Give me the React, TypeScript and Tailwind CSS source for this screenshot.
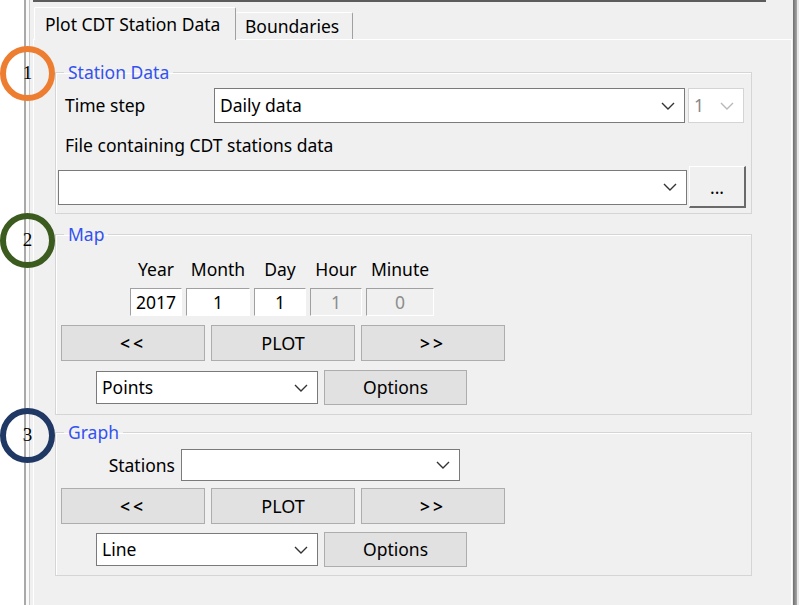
import type { ReactNode } from 'react'

const FONT = { fontFamily: '"Noto Sans", "Open Sans", sans-serif' }

function Chevron({ light }: { light?: boolean }) {
    return (
        <svg width="14" height="8" viewBox="0 0 14 8" className="shrink-0">
            <polyline points="1,1 7,7 13,1" fill="none" stroke={light ? '#b8b8b8' : '#333333'} strokeWidth="1.4" />
        </svg>
    )
}

function Combo({ text, className, disabled }: { text?: string; className: string; disabled?: boolean }) {
    return (
        <div
            className={`flex items-center justify-between pl-[5px] pr-[9px] ${
                disabled ? 'border border-[#d4d4d4] bg-white text-[#8a8a8a]' : 'border border-[#7a7a7a] bg-white text-black'
            } ${className}`}
        >
            <span>{text}</span>
            <Chevron light={disabled} />
        </div>
    )
}

function Btn({ children, className }: { children: ReactNode; className: string }) {
    return (
        <div className={`flex items-center justify-center border border-[#adadad] bg-[#e1e1e1] text-black ${className}`}>
            {children}
        </div>
    )
}

function Group({ title, children, className }: { title: string; children: ReactNode; className?: string }) {
    return (
        <fieldset className={`w-[697px] border border-[#d5d5d5] shadow-[inset_1px_1px_0_#ffffff] ${className ?? ''}`}>
            <legend className="ml-[8px] px-[4px] leading-[20px] text-[#3352f0]">{title}</legend>
            {children}
        </fieldset>
    )
}

function NavButtons({ className }: { className: string }) {
    return (
        <div className={`flex gap-[6px] ml-[5px] ${className}`}>
            <Btn className="w-[144px] h-[36px] tracking-[3px] font-semibold">&lt;&lt;</Btn>
            <Btn className="w-[144px] h-[36px] text-[18px]">PLOT</Btn>
            <Btn className="w-[144px] h-[36px] tracking-[3px] font-semibold">&gt;&gt;</Btn>
        </div>
    )
}

function TimeField({ label, value, w, disabled }: { label: string; value: string; w: string; disabled?: boolean }) {
    return (
        <div className="flex flex-col items-center">
            <div className="leading-[20px] h-[20px] whitespace-nowrap">{label}</div>
            <div
                className={`mt-[9px] h-[28px] ${w} flex items-center justify-center border-t border-l border-[#a0a0a0] border-r-white border-b-white border-r border-b ${
                    disabled ? 'bg-[#f0f0f0] text-[#8d8d8d]' : 'bg-white text-black'
                }`}
            >
                {value}
            </div>
        </div>
    )
}

function Marker({ n, color, top }: { n: string; color: string; top: string }) {
    return (
        <div
            className={`absolute left-0 ${top} w-[55px] h-[55px] rounded-full border-[6px] flex items-center justify-center text-[19px] text-black`}
            style={{ borderColor: color, fontFamily: '"Liberation Serif", serif' }}
        >
            {n}
        </div>
    )
}

export default function App() {
    return (
        <div className="relative w-[799px] h-[605px] flex bg-white text-[17.5px] text-black overflow-hidden" style={FONT}>
            <div className="w-[24px] bg-white" />
            <div className="w-[2px] bg-[#a9a9a9]" />
            <div className="w-[3px] bg-[#fafafa]" />
            <div className="w-[1px] bg-[#c8c8c8]" />

            {/* main panel */}
            <div className="w-[763px] bg-[#f0f0f0] flex flex-col">
                <div className="h-[2px] flex">
                    <div className="w-[3px]" />
                    <div className="w-[733px] bg-[#5c5c5c]" />
                </div>

                {/* tabs */}
                <div className="h-[37px] flex items-end pl-[4px]">
                    <div className="relative z-10 -mb-[1px] h-[33px] w-[202px] flex items-center pl-[10px] bg-[#f0f0f0] border-t border-l border-white border-r border-r-[#a0a0a0] rounded-t-[2px] whitespace-nowrap">
                        Plot CDT Station Data
                    </div>
                    <div className="h-[27px] w-[117px] flex items-center pl-[9px] bg-[#f0f0f0] border-t border-white border-r border-r-[#a0a0a0] rounded-t-[2px]">
                        Boundaries
                    </div>
                </div>

                {/* tab page */}
                <div className="flex-1 ml-[3px] mr-[1px] border-t border-l border-r border-white pt-[22px] pl-[21px]">
                    <Group title="Station Data" className="pb-[5px]">
                        <div className="flex items-center mt-[6px]">
                            <div className="w-[158px] pl-[9px] whitespace-nowrap">Time step</div>
                            <Combo text="Daily data" className="w-[471px] h-[35px]" />
                            <Combo text="1" disabled className="ml-[3px] w-[56px] h-[35px]" />
                        </div>
                        <div className="mt-[12px] pl-[9px] leading-[20px]">File containing CDT stations data</div>
                        <div className="flex items-center mt-[11px] h-[42px]">
                            <Combo className="ml-[2px] w-[629px] h-[35px]" />
                            <div className="ml-[2px] w-[57px] h-[42px] flex items-center justify-center pt-[2px] bg-[#f0f0f0] border-t border-l border-white border-r-2 border-b-2 border-r-[#6a6a6a] border-b-[#6a6a6a] text-black">
                                ...
                            </div>
                        </div>
                    </Group>

                    <Group title="Map" className="mt-[10px] pb-[9px]">
                        <div className="flex gap-[4px] ml-[74px] mt-[15px]">
                            <TimeField label="Year" value="2017" w="w-[52px]" />
                            <TimeField label="Month" value="1" w="w-[64px]" />
                            <TimeField label="Day" value="1" w="w-[52px]" />
                            <TimeField label="Hour" value="1" w="w-[52px]" disabled />
                            <TimeField label="Minute" value="0" w="w-[68px]" disabled />
                        </div>
                        <NavButtons className="mt-[9px]" />
                        <div className="flex items-center gap-[6px] ml-[40px] mt-[9px] h-[35px]">
                            <Combo text="Points" className="w-[222px] h-[33px]" />
                            <Btn className="w-[143px] h-[35px]">Options</Btn>
                        </div>
                    </Group>

                    <Group title="Graph" className="mt-[7px] pb-[8px]">
                        <div className="flex items-center mt-[7px]">
                            <div className="w-[119px] text-right whitespace-nowrap">Stations</div>
                            <Combo className="ml-[6px] w-[279px] h-[32px]" />
                        </div>
                        <NavButtons className="mt-[7px]" />
                        <div className="flex items-center gap-[6px] ml-[40px] mt-[8px] h-[35px]">
                            <Combo text="Line" className="w-[222px] h-[33px]" />
                            <Btn className="w-[143px] h-[35px]">Options</Btn>
                        </div>
                    </Group>
                </div>
            </div>

            <div className="w-[4px] bg-gradient-to-r from-[#6e6e6e] to-[#a8a8a8]" />
            <div className="w-[2px] bg-[#e8e8e8]" />

            <Marker n="1" color="#ed7d31" top="top-[46px]" />
            <Marker n="2" color="#3b5b1f" top="top-[213px]" />
            <Marker n="3" color="#1f3864" top="top-[408px]" />
        </div>
    )
}
